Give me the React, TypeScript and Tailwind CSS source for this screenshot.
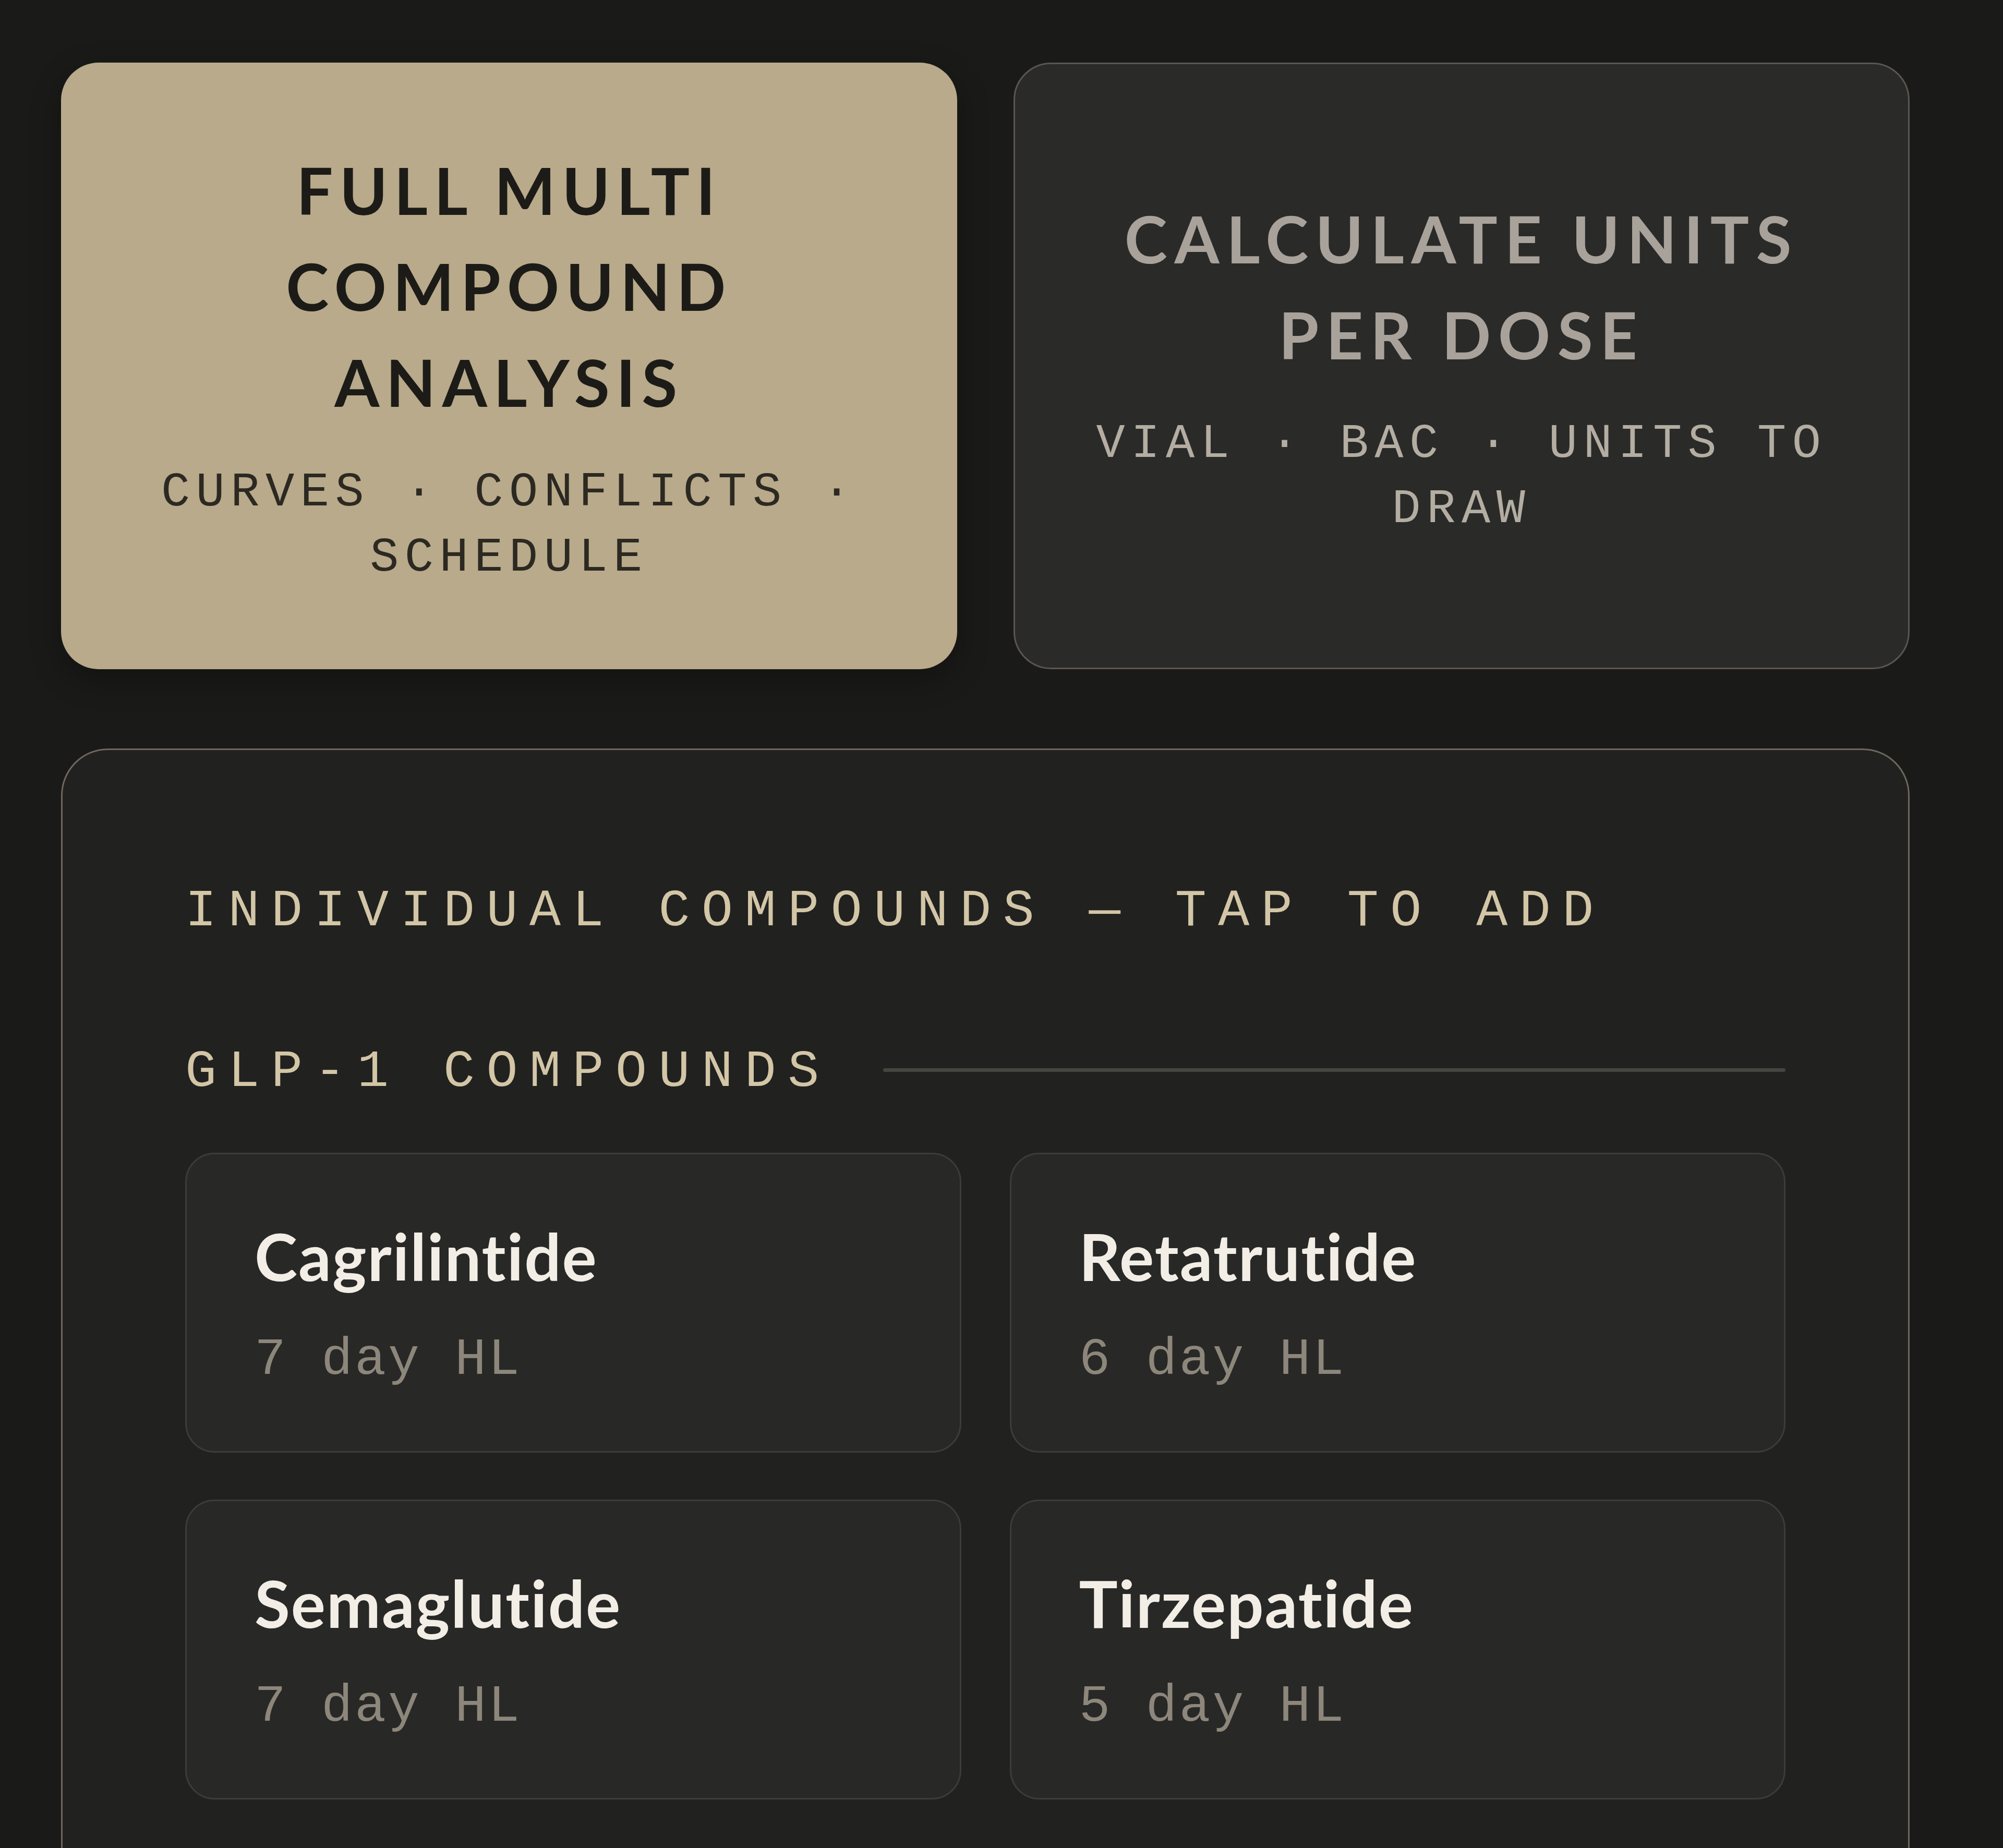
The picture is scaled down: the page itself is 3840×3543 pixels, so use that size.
const COMPOUNDS = [
  { name: 'Cagrilintide', hl: '7 day HL' },
  { name: 'Retatrutide', hl: '6 day HL' },
  { name: 'Semaglutide', hl: '7 day HL' },
  { name: 'Tirzepatide', hl: '5 day HL' },
];

const sans = "font-['Lato','Noto_Sans',sans-serif]";
const mono = "font-['Liberation_Mono','DejaVu_Sans_Mono',monospace]";

export default function App() {
  return (
    <main className="h-[3543px] overflow-hidden bg-[#1a1a19] pl-[117px] pr-[179px] pt-[120px]">
      {/* Mode buttons */}
      <div className="grid grid-cols-2 gap-[108px]">
        <button className="flex h-[1163px] flex-col items-center justify-center rounded-[72px] bg-[#b8aa8a] text-center shadow-[0_20px_60px_rgba(0,0,0,0.3)]">
          <span className={`${sans} block text-[124px] font-bold leading-[184px] tracking-[0.1em] text-[#1c1b17]`}>
            FULL MULTI<br />COMPOUND<br />ANALYSIS
          </span>
          <span className={`${mono} mt-[58px] block text-[92px] leading-[125px] tracking-[11.5px] text-[#2c2922]`}>
            CURVES · CONFLICTS ·<br />SCHEDULE
          </span>
        </button>
        <button className="flex h-[1163px] flex-col items-center justify-center rounded-[72px] border-[3px] border-[#5b564e] bg-[#2a2a29] text-center">
          <span className={`${sans} block text-[124px] font-bold leading-[184px] tracking-[0.11em] text-[#a8a29a]`}>
            CALCULATE UNITS<br />PER DOSE
          </span>
          <span className={`${mono} mt-[56px] block text-[92px] leading-[125px] tracking-[11.5px] text-[#b3ada2]`}>
            VIAL · BAC · UNITS TO<br />DRAW
          </span>
        </button>
      </div>

      {/* Individual compounds */}
      <section className="mt-[152px] rounded-[90px] border-[3px] border-[#6e675b] bg-[#212120] px-[235px] pb-[235px] pt-[240px]">
        <h2 className={`${mono} text-[100px] leading-[140px] tracking-[22.5px] text-[#d3c6a6]`}>
          INDIVIDUAL COMPOUNDS — TAP TO ADD
        </h2>

        <div className="mt-[168px] flex items-center gap-[100px]">
          <h3 className={`${mono} text-[100px] leading-[140px] tracking-[22.5px] text-[#d3c6a6]`}>GLP-1 COMPOUNDS</h3>
          <div className="mb-[10px] h-[7px] flex-1 rounded-full bg-[#46443f]" />
        </div>

        <div className="mt-[84px] grid grid-cols-2 gap-x-[93px] gap-y-[90px]">
          {COMPOUNDS.map(c => (
            <button
              key={c.name}
              className="flex h-[575px] flex-col justify-center gap-[50px] rounded-[56px] border-[3px] border-[#3e3c39] bg-[#282827] px-[130px] pt-[10px] text-left"
            >
              <span className={`${sans} block text-[124px] font-bold leading-[160px] tracking-[2px] text-[#f2eee6]`}>{c.name}</span>
              <span className={`${mono} block text-[100px] leading-[140px] tracking-[4px] text-[#8c867b]`}>{c.hl}</span>
            </button>
          ))}
        </div>
      </section>
    </main>
  );
}
